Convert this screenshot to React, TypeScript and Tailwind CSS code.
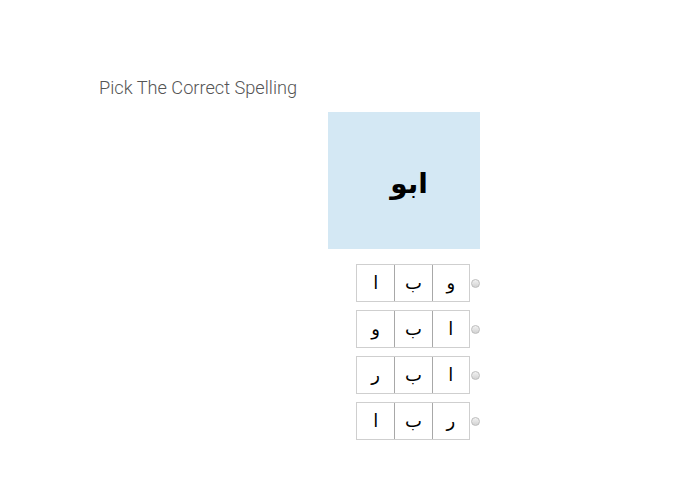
const options = [
  ["ا", "ب", "و"],
  ["و", "ب", "ا"],
  ["ر", "ب", "ا"],
  ["ا", "ب", "ر"],
];

function Radio() {
  return (
    <span className="block h-[9px] w-[9px] rounded-full border border-[#bdbdbd] bg-gradient-to-b from-[#f2f2f2] to-[#d2d2d2]" />
  );
}

export default function App() {
  return (
    <div className="min-h-[494px] w-[695px] bg-white pt-[77px] font-['Roboto',sans-serif]">
      <h1 className="pl-[99px] text-[18.2px] font-light leading-[21px] text-[#555]">
        Pick The Correct Spelling
      </h1>

      <div className="ml-[328px] mt-[14px] flex h-[137px] w-[152px] items-center justify-center bg-[#d4e8f4]">
        <span
          dir="rtl"
          className="pl-[10px] pt-[6px] font-['DejaVu_Sans',sans-serif] text-[28px] font-bold leading-none text-black"
        >
          ابو
        </span>
      </div>

      <div className="ml-[356px] mt-[15px] flex flex-col gap-[8px]">
        {options.map((row, i) => (
          <div key={i} className="flex items-center gap-[1px]">
            <div className="grid h-[38px] w-[114px] grid-cols-3 border border-[#cfcfcf]">
              {row.map((ch, j) => (
                <div
                  key={j}
                  className={`flex items-center justify-center font-['DejaVu_Sans',sans-serif] text-[18px] leading-none text-black ${
                    j > 0 ? "border-l border-[#a8a8a8]" : ""
                  }`}
                >
                  {ch}
                </div>
              ))}
            </div>
            <Radio />
          </div>
        ))}
      </div>
    </div>
  );
}
